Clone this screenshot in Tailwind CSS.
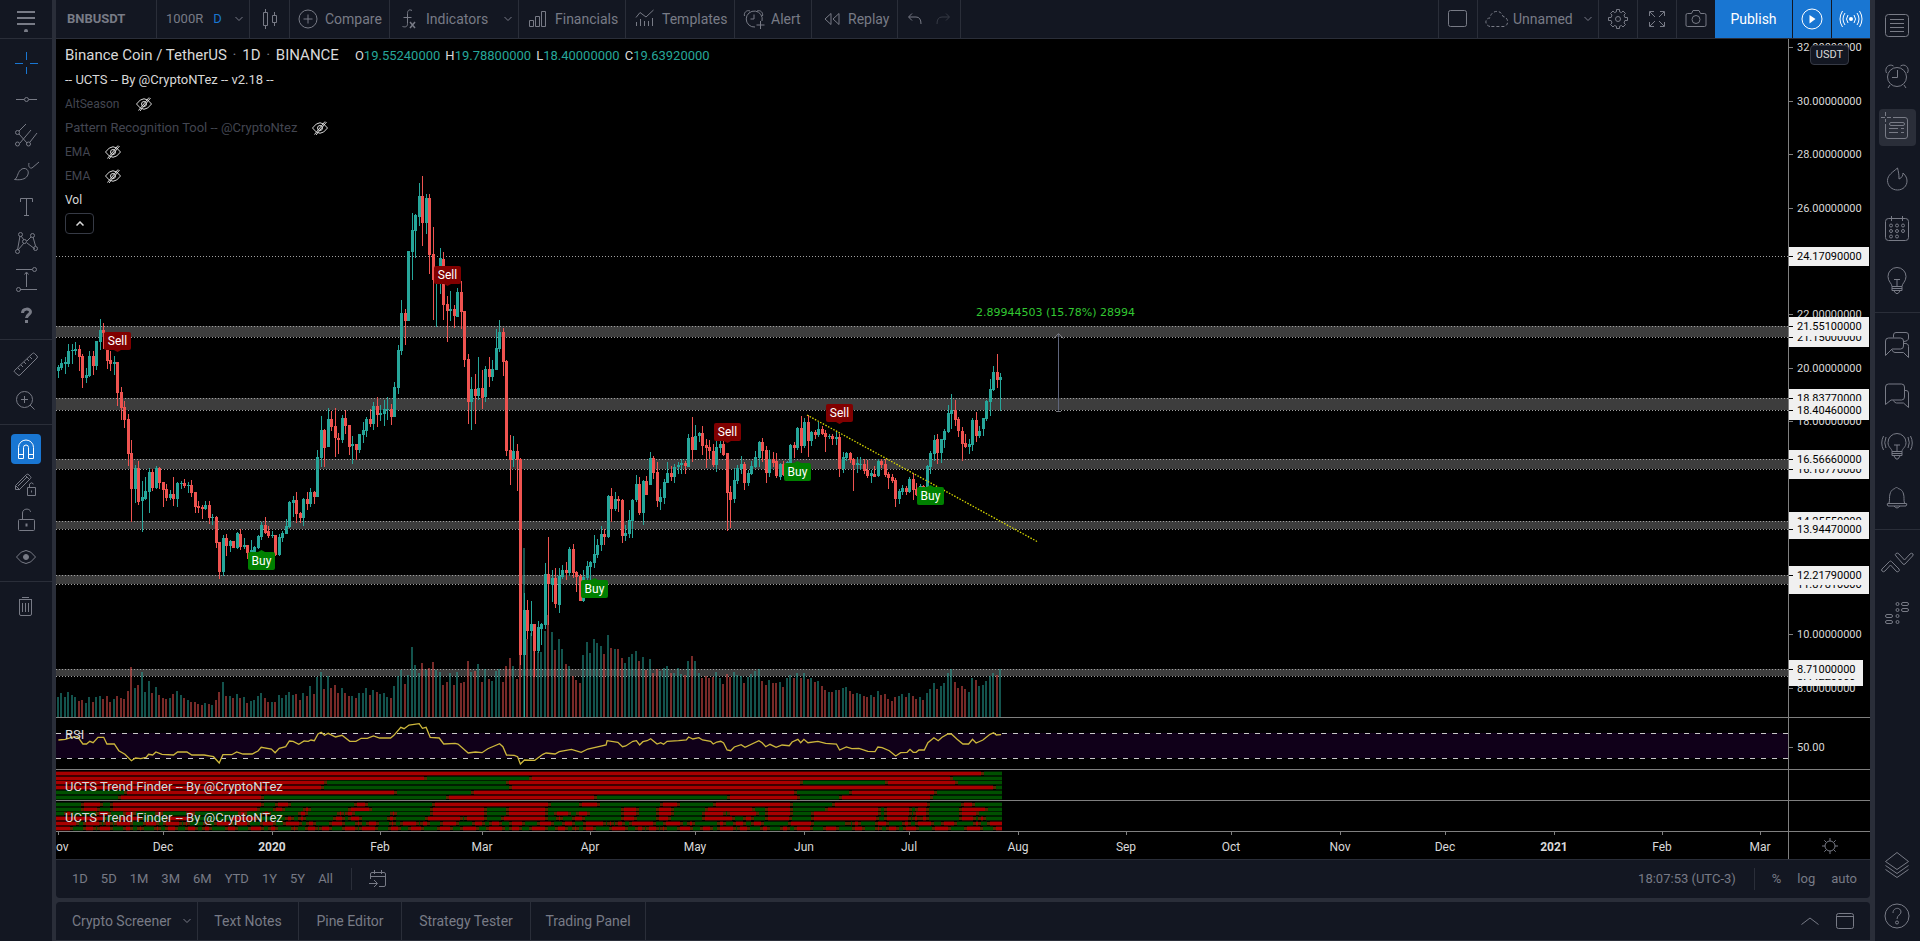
<!DOCTYPE html>
<html lang="en">
<head>
<meta charset="utf-8">
<title>BNBUSDT chart</title>
<script src="https://cdn.jsdelivr.net/npm/@tailwindcss/browser@4"></script>
</head>
<body class="flex h-screen overflow-hidden bg-[#2a2e39] font-['Roboto',sans-serif] text-sm text-[#787b86]">

<!-- Drawing tools -->
<aside class="flex w-[52px] shrink-0 flex-col bg-[#131722]">
  <button aria-label="Menu" class="flex h-[39px] items-center justify-center border-b border-[#2a2e39]">
    <svg width="20" height="26" viewBox="0 0 20 26" fill="none" stroke="currentColor" stroke-width="2"><path d="M1 6h18M1 12h18M1 18h18"/><circle cx="10" cy="25" r="1" stroke-width="2"/></svg>
  </button>
  <div class="flex flex-col items-center border-b border-[#2a2e39] py-1.5">
    <button aria-label="Cross" class="flex h-9 w-full items-center justify-center text-[#1976d2]"><svg width="28" height="28" viewBox="0 0 28 28" fill="none" stroke="currentColor"><path d="M3 14.500h8M18 14.500h8M14.500 3v8M14.500 18v7"/></svg></button>
    <button aria-label="Trend line" class="flex h-9 w-full items-center justify-center"><svg width="28" height="28" viewBox="0 0 28 28" fill="none" stroke="currentColor"><path d="M4 14.500h8M17 14.500h8"/><circle cx="14.500" cy="14.500" r="2"/></svg></button>
    <button aria-label="Pitchfork" class="flex h-9 w-full items-center justify-center"><svg width="28" height="28" viewBox="0 0 28 28" fill="none" stroke="currentColor"><path d="M7 10l7-7M8 22L19 9M7 13l8 9M18 21l7-9"/><circle cx="5.500" cy="11.500" r="2"/><circle cx="5.500" cy="23" r="2"/><circle cx="16.500" cy="23" r="2"/></svg></button>
    <button aria-label="Brush" class="flex h-9 w-full items-center justify-center"><svg width="28" height="28" viewBox="0 0 28 28" fill="none" stroke="currentColor"><path d="M2.500 22.500c3-1 3-7 6-9.500 2-2 5-2 6.500-.500 2 2 1.500 5-.500 7.500-3 3-8 3-12 2.500z"/><path d="M17 6c-1 4 1 5.500 3 5l7-6"/></svg></button>
    <button aria-label="Text" class="flex h-9 w-full items-center justify-center"><svg width="28" height="28" viewBox="0 0 28 28" fill="none" stroke="currentColor"><path d="M8.500 9V5.500h12V9M14.500 5.500v17M12 22.500h5"/></svg></button>
    <button aria-label="Patterns" class="flex h-9 w-full items-center justify-center"><svg width="28" height="28" viewBox="0 0 28 28" fill="none" stroke="currentColor"><path d="M5.500 21L8 7M6 21l6-7M9 7l3 4M15 12l4-4M15 14l8 6M21 8l2.500 9"/><circle cx="8.500" cy="5.500" r="2"/><circle cx="20.500" cy="6.500" r="2"/><circle cx="12.500" cy="12.500" r="2"/><circle cx="5.500" cy="22.500" r="2"/><circle cx="23.500" cy="19.500" r="2"/></svg></button>
    <button aria-label="Prediction" class="flex h-9 w-full items-center justify-center"><svg width="28" height="28" viewBox="0 0 28 28" fill="none" stroke="currentColor"><path d="M4 4.500h16M8 24.500h17M14.500 22V8M12.500 9.500l2-2.500 2 2.500"/><circle cx="22.500" cy="4.500" r="2"/><circle cx="6.500" cy="24.500" r="2"/></svg></button>
    <button aria-label="Icons" class="flex h-9 w-full items-center justify-center"><svg width="28" height="28" viewBox="0 0 28 28" fill="none" stroke="currentColor" stroke-width="3"><path d="M10.500 12c0-5 8-5 8-1 0 2.500-4 2.500-4 6M14.500 19v3"/></svg></button>
  </div>
  <div class="flex flex-col items-center border-b border-[#2a2e39] py-1.5">
    <button aria-label="Measure" class="flex h-9 w-full items-center justify-center"><svg width="28" height="28" viewBox="0 0 28 28" fill="none" stroke="currentColor"><path d="M2.500 20.500L20.500 3.500q1-1 2 0l2.500 2.500q1 1 0 2L8 25q-1 1-2 0l-3.500-3q-.8-.8 0-1.500zM6 18l2 2M9 15l2 2M12 12l2 2M15 9l2 2M18 7l2 2"/></svg></button>
    <button aria-label="Zoom in" class="flex h-9 w-full items-center justify-center"><svg width="28" height="28" viewBox="0 0 28 28" fill="none" stroke="currentColor"><circle cx="12.500" cy="13.500" r="8"/><path d="M12.500 10v7M9 13.500h7M18 19l4.500 4.500"/></svg></button>
  </div>
  <div class="flex flex-col items-center border-b border-[#2a2e39] py-1.5">
    <div class="flex h-9 items-center"><button aria-label="Magnet" class="flex size-[30px] items-center justify-center rounded-sm bg-[#1976d2] text-white"><svg width="28" height="28" viewBox="0 0 28 28" fill="none" stroke="currentColor"><path d="M6.500 23.500v-11a7.500 7.500 0 0 1 15 0v11h-5v-11a2.500 2.500 0 0 0-5 0v11zM6.500 19.500h5M16.500 19.500h5"/></svg></button></div>
    <button aria-label="Stay in drawing mode" class="flex h-9 w-full items-center justify-center"><svg width="28" height="28" viewBox="0 0 28 28" fill="none" stroke="currentColor"><path d="M3.500 18.500v-4l11-11q1.500-1 2.500.500l1.500 1.500q1 1 0 2l-11 11zM4 15l4 4M6 15l9-9M14 5l3 3M15.500 16.500h8v8h-8zM17.500 16v-3q2-2.500 4 0M19.500 19.500v2"/></svg></button>
    <button aria-label="Lock drawings" class="flex h-9 w-full items-center justify-center"><svg width="28" height="28" viewBox="0 0 28 28" fill="none" stroke="currentColor"><rect x="6.500" y="12.500" width="16" height="11" rx="1"/><path d="M10.500 12V6c0-5 8-5 8-1"/><path d="M14.500 16.500v3" stroke-width="2"/></svg></button>
    <button aria-label="Hide drawings" class="flex h-9 w-full items-center justify-center"><svg width="28" height="28" viewBox="0 0 28 28" fill="none" stroke="currentColor"><path d="M4.500 14q9.500-13 19 0-9.500 13-19 0z"/><circle cx="14" cy="14" r="2.500" fill="currentColor"/></svg></button>
  </div>
  <div class="flex flex-col items-center py-1.5">
    <button aria-label="Remove drawings" class="flex h-9 w-full items-center justify-center"><svg width="28" height="28" viewBox="0 0 28 28" fill="none" stroke="currentColor"><path d="M7 7.500h13M10 5.500h7M7.500 8v14q0 1.500 1.500 1.500h9q1.500 0 1.500-1.500V8M10.500 11v9M13.500 11v9M16.500 11v9"/></svg></button>
  </div>
</aside>

<div class="ml-1 flex min-w-0 flex-1 flex-col">
  <!-- Top toolbar -->
  <header class="flex h-[39px] shrink-0 border-b border-[#2a2e39] bg-[#131722]">
    <button class="w-[101px] border-r border-[#2a2e39] pl-[11px] text-left text-[13px] font-bold">BNBUSDT</button>
    <div class="flex w-[93px] items-center border-r border-[#2a2e39] pl-[9px]">
      <button class="text-[13px]">1000R</button><button class="ml-2.5 text-[13px] text-[#1976d2]">D</button>
      <button aria-label="Intervals" class="ml-auto pr-1.5"><svg width="8" height="6" viewBox="0 0 8 6" fill="none" stroke="currentColor"><path d="M.5 1L4 4.500 7.500 1"/></svg></button>
    </div>
    <button aria-label="Chart type" class="flex w-[40px] items-center justify-center border-r border-[#2a2e39]"><svg width="16" height="20" viewBox="0 0 16 20" fill="none" stroke="currentColor"><path d="M1.500 3.500h4v13h-4zM3.500 3.500V0M3.500 16.500V20M10.500 6.500h4v7h-4zM12.500 6.500V3M12.500 13.500V17"/></svg></button>
    <button class="flex w-[100px] items-center gap-[7px] border-r border-[#2a2e39] pl-2"><svg width="20" height="20" viewBox="0 0 20 20" fill="none" stroke="currentColor"><circle cx="10" cy="10" r="9"/><path d="M10 5.500v9M5.500 10h9"/></svg>Compare</button>
    <button class="flex w-[129px] items-center gap-[7px] border-r border-[#2a2e39] pl-[9px]"><svg width="20" height="20" viewBox="0 0 20 20" fill="none" stroke="currentColor"><path d="M13 1.500c-3-1.500-4.500 0-4.500 3v10c0 3-1.500 4-5 3M4.500 8.500h8"/><path stroke-width="1.500" d="M11 13l5 6M16 13l-5 6"/></svg>Indicators<svg class="ml-auto mr-1.5" width="8" height="6" viewBox="0 0 8 6" fill="none" stroke="currentColor"><path d="M.5 1L4 4.500 7.500 1"/></svg></button>
    <button class="flex w-[107px] items-center gap-[7px] border-r border-[#2a2e39] pl-[9px]"><svg width="20" height="20" viewBox="0 0 20 20" fill="none" stroke="currentColor"><path d="M1.500 11.500h4v6h-4zM7.500 7.500h4v10h-4zM13.500 2.500h4v15h-4z"/></svg>Financials</button>
    <button class="flex w-[109px] items-center gap-[7px] border-r border-[#2a2e39] pl-[9px]"><svg width="20" height="20" viewBox="0 0 20 20" fill="none" stroke="currentColor"><path d="M1 8.500l4-5 6 4.500 7.500-7M1.500 13v4M5.500 10v7M9.500 12v5M13.500 12v5M17.500 9v8"/></svg>Templates</button>
    <button class="flex w-[77px] items-center gap-1.5 border-r border-[#2a2e39] pl-2"><svg width="22" height="22" viewBox="0 0 22 22" fill="none" stroke="currentColor"><path d="M12 19a8 8 0 1 1 7-6M1.500 8c-1-3 2-6.500 5.500-5M19.500 8c1-3-2-6.500-5.500-5M11 6.500V11H7.500M17.500 13v8M13.500 17h8"/></svg>Alert</button>
    <button class="flex w-[86px] items-center gap-1.5 border-r border-[#2a2e39] pl-2.5"><svg width="20" height="14" viewBox="0 0 20 14" fill="none" stroke="currentColor"><path d="M9 1.500v11L3 7zM17 1.500v11L11 7z"/></svg>Replay</button>
    <div class="flex w-[63px] items-center justify-center gap-3 border-r border-[#2a2e39]">
      <button aria-label="Undo"><svg width="16" height="12" viewBox="0 0 16 12" fill="none" stroke="currentColor"><path d="M5 .5L1.500 4 5 7.500M2 4h7q5 0 5 7"/></svg></button>
      <button aria-label="Redo" class="text-[#363a45]"><svg width="16" height="12" viewBox="0 0 16 12" fill="none" stroke="currentColor"><path d="M11 .5L14.500 4 11 7.500M14 4H7Q2 4 2 11"/></svg></button>
    </div>
    <div class="flex-1"></div>
    <button aria-label="Layout" class="flex w-[39px] items-center justify-center border-l border-[#2a2e39]"><svg width="20" height="18" viewBox="0 0 20 18" fill="none" stroke="currentColor"><rect x=".5" y=".5" width="18" height="16" rx="2"/></svg></button>
    <button class="flex w-[121px] items-center gap-1 border-l border-[#2a2e39] pl-[7px]"><svg width="24" height="18" viewBox="0 0 24 18" fill="none" stroke="currentColor" stroke-dasharray="3 2"><path d="M5 16.500C-1 15 0 8 5 8 6 0 16-1 18 6.500c6 1 6 9 1 10z"/></svg>Unnamed<svg class="ml-auto mr-1.5" width="8" height="6" viewBox="0 0 8 6" fill="none" stroke="currentColor"><path d="M.5 1L4 4.500 7.500 1"/></svg></button>
    <button aria-label="Settings" class="flex w-[39px] items-center justify-center border-l border-[#2a2e39]"><svg width="20" height="20" viewBox="0 0 20 20" fill="none" stroke="currentColor"><path d="M8.500.5h3v2.200l2 .9L15 2l2.500 2.500L16 6l.9 2.500h2.600v3h-2.600L16 14l1.500 1.500L15 18l-1.500-1.500-2 .8v2.200h-3v-2.200l-2-.8L5 18l-2.500-2.500L4 14l-.9-2.500H.5v-3h2.600L4 6 2.500 4.500 5 2l1.500 1.600 2-.9z"/><circle cx="10" cy="10" r="2.500"/></svg></button>
    <button aria-label="Fullscreen" class="flex w-[39px] items-center justify-center border-l border-[#2a2e39]"><svg width="18" height="18" viewBox="0 0 18 18" fill="none" stroke="currentColor"><path d="M1.500 6V1.500H6M12 1.500h4.500V6M16.500 12v4.500H12M6 16.500H1.500V12M2 2l5 5M16 2l-5 5M16 16l-5-5M2 16l5-5"/></svg></button>
    <button aria-label="Snapshot" class="flex w-[39px] items-center justify-center border-l border-[#2a2e39]"><svg width="22" height="18" viewBox="0 0 22 18" fill="none" stroke="currentColor"><path d="M2.500 3.500h4l1.500-3h6l1.500 3h4q1.500 0 1.500 1.500v10q0 1.500-1.500 1.500h-17Q1 16.500 1 15V5q0-1.500 1.500-1.500z"/><circle cx="11" cy="9.500" r="4"/></svg></button>
    <button class="h-[38px] w-[77px] bg-[#1976d2] text-white">Publish</button>
    <button aria-label="Play" class="ml-px flex h-[38px] w-[38px] items-center justify-center bg-[#1976d2] text-white"><svg width="22" height="22" viewBox="0 0 22 22" fill="none" stroke="currentColor"><circle cx="11" cy="11" r="10"/><path fill="currentColor" stroke="none" d="M8.500 7l6 4-6 4.500z"/></svg></button>
    <button aria-label="Broadcast" class="ml-px flex h-[38px] w-[38px] items-center justify-center bg-[#1976d2] text-white"><svg width="24" height="18" viewBox="0 0 24 18" fill="none" stroke="currentColor"><circle cx="12" cy="9" r="2" fill="currentColor" stroke="none"/><path d="M9 5q-3 4 0 8M15 5q3 4 0 8M6 3q-4 6 0 12M18 3q4 6 0 12M3.500 1q-5 8 0 16M20.500 1q5 8 0 16"/></svg></button>
  </header>

  <!-- Chart panes -->
  <main class="relative flex min-h-0 flex-1 flex-col overflow-hidden bg-black text-[#d9d9d9]">
    <div class="flex min-h-0 flex-1">
      <div class="relative min-w-0 flex-1 overflow-hidden">
        <svg class="absolute inset-0 h-full w-full" font-family="Roboto, sans-serif" font-size="12"><g id="price" transform="translate(-56 -39)"></g></svg>
        <div class="absolute left-[9px] top-[5px] flex flex-col text-xs">
          <div class="flex h-6 items-center"><h1 class="text-[15px]">Binance Coin / TetherUS <span class="mx-0.5 text-[#787b86]">·</span> 1D <span class="mx-0.5 text-[#787b86]">·</span> BINANCE</h1>
            <p class="ml-4 flex gap-[5px] text-[13px] text-[#26a69a]"><span><span class="text-[#d9d9d9]">O</span>19.55240000</span><span><span class="text-[#d9d9d9]">H</span>19.78800000</span><span><span class="text-[#d9d9d9]">L</span>18.40000000</span><span><span class="text-[#d9d9d9]">C</span>19.63920000</span></p></div>
          <p class="h-6 text-[13px] leading-6">-- UCTS -- By @CryptoNTez -- v2.18 --</p>
          <div class="flex h-6 items-center gap-4 text-[#434651]">AltSeason<button aria-label="Show AltSeason" class="text-[#d9d9d9]"><svg width="18" height="14" viewBox="0 0 18 14" fill="none" stroke="currentColor"><path d="M1.500 7Q9-3.500 16.500 7 9 17.500 1.500 7zM3.500 13.500L14 .5M5 14L15.500 1"/><circle cx="9" cy="7" r="2.500"/></svg></button></div>
          <div class="flex h-6 items-center gap-3.5 text-[13px] text-[#434651]">Pattern Recognition Tool -- @CryptoNtez<button aria-label="Show pattern tool" class="text-[#d9d9d9]"><svg width="18" height="14" viewBox="0 0 18 14" fill="none" stroke="currentColor"><path d="M1.500 7Q9-3.500 16.500 7 9 17.500 1.500 7zM3.500 13.500L14 .5M5 14L15.500 1"/><circle cx="9" cy="7" r="2.500"/></svg></button></div>
          <div class="flex h-6 items-center gap-3.5 text-[#434651]">EMA<button aria-label="Show EMA 1" class="text-[#d9d9d9]"><svg width="18" height="14" viewBox="0 0 18 14" fill="none" stroke="currentColor"><path d="M1.500 7Q9-3.500 16.500 7 9 17.500 1.500 7zM3.500 13.500L14 .5M5 14L15.500 1"/><circle cx="9" cy="7" r="2.500"/></svg></button></div>
          <div class="flex h-6 items-center gap-3.5 text-[#434651]">EMA<button aria-label="Show EMA 2" class="text-[#d9d9d9]"><svg width="18" height="14" viewBox="0 0 18 14" fill="none" stroke="currentColor"><path d="M1.500 7Q9-3.500 16.500 7 9 17.500 1.500 7zM3.500 13.500L14 .5M5 14L15.500 1"/><circle cx="9" cy="7" r="2.500"/></svg></button></div>
          <p class="h-6 leading-6">Vol</p>
          <button aria-label="Collapse legend" class="mt-px flex h-[21px] w-[29px] items-center justify-center rounded-sm border border-[#363a45]"><svg width="8" height="5" viewBox="0 0 8 5" fill="none" stroke="currentColor" stroke-width="1.500"><path d="M.5 4.500L4 1l3.500 3.500"/></svg></button>
        </div>
      </div>
      <div class="relative w-[82px] shrink-0 overflow-hidden border-l border-[#7f7f7f]">
        <svg class="absolute inset-0 h-full w-full" font-family="Roboto, sans-serif" font-size="11"><g id="scale" transform="translate(-1789 -39)"></g></svg>
        <button class="absolute left-[21px] top-1.5 h-5 w-[39px] rounded-sm border border-[#363a45] bg-[#131722] text-[11px]">USDT</button>
      </div>
    </div>
    <div class="flex h-[52px] shrink-0 border-t border-[#7f7f7f]">
      <div class="relative min-w-0 flex-1 overflow-hidden">
        <svg class="absolute inset-0 h-full w-full"><g id="rsi" transform="translate(-56 -718)"></g></svg>
        <span class="absolute left-[9px] top-2 text-[13px] leading-[18px]">RSI</span>
      </div>
      <div class="flex w-[82px] shrink-0 items-center border-l border-[#7f7f7f] pt-2 text-[11px]"><span class="mr-1 h-px w-1 bg-[#7f7f7f]"></span>50.00</div>
    </div>
    <div class="flex h-[31px] shrink-0 border-t border-[#7f7f7f]">
      <div class="relative min-w-0 flex-1 overflow-hidden">
        <svg class="absolute inset-0 h-full w-full"><g id="trendA" transform="translate(-56 -770)"></g></svg>
        <span class="absolute left-[9px] top-2 text-[13px] leading-[18px]">UCTS Trend Finder -- By @CryptoNTez</span>
      </div>
      <div class="w-[82px] shrink-0 border-l border-[#7f7f7f]"></div>
    </div>
    <div class="flex h-[31px] shrink-0 border-t border-[#7f7f7f]">
      <div class="relative min-w-0 flex-1 overflow-hidden">
        <svg class="absolute inset-0 h-full w-full"><g id="trendB" transform="translate(-56 -801)"></g></svg>
        <span class="absolute left-[9px] top-2 text-[13px] leading-[18px]">UCTS Trend Finder -- By @CryptoNTez</span>
      </div>
      <div class="w-[82px] shrink-0 border-l border-[#7f7f7f]"></div>
    </div>
    <div class="flex h-7 shrink-0 border-t border-[#7f7f7f]">
      <div class="relative min-w-0 flex-1 overflow-hidden">
        <svg class="absolute inset-0 h-full w-full" font-family="Roboto, sans-serif" font-size="12"><g id="time" transform="translate(-56 -832)"></g></svg>
      </div>
      <button aria-label="Axis settings" class="flex w-[82px] shrink-0 items-center justify-center border-l border-[#7f7f7f] text-[#787b86]"><svg width="16" height="16" viewBox="0 0 16 16" fill="none" stroke="currentColor"><circle cx="8" cy="8" r="5"/><path d="M8 0v3M8 13v3M0 8h3M13 8h3M2.300 2.300l2 2M11.700 11.700l2 2M2.300 13.700l2-2M11.700 4.300l2-2"/></svg></button>
    </div>
  </main>

  <!-- Range toolbar -->
  <div class="flex h-[39px] shrink-0 items-center rounded-b border-t border-[#2a2e39] bg-[#131722] text-[13px]">
    <div class="flex gap-[13px] pl-4">
      <button>1D</button><button>5D</button><button>1M</button><button>3M</button><button>6M</button><button>YTD</button><button>1Y</button><button>5Y</button><button>All</button>
    </div>
    <span class="ml-[18px] h-[22px] w-px bg-[#2a2e39]"></span>
    <button aria-label="Go to date" class="ml-4"><svg width="20" height="18" viewBox="0 0 20 18" fill="none" stroke="currentColor"><path d="M2.500 9V4Q2.500 2.500 4 2.500h12q1.500 0 1.500 1.500v11q0 1.500-1.500 1.500h-5M2.500 6.500h15M6.500 0v4M13.500 0v4M1 13.500h8M6 10l3.500 3.500L6 17"/></svg></button>
    <button class="ml-auto">18:07:53 (UTC-3)</button>
    <span class="ml-[18px] h-[22px] w-px bg-[#2a2e39]"></span>
    <button class="ml-[17px]">%</button><button class="ml-4">log</button><button class="ml-4 mr-[13px]">auto</button>
  </div>

  <!-- Bottom tabs -->
  <footer class="mt-1 mb-px flex h-[38px] shrink-0 rounded-t bg-[#131722]">
    <button class="flex w-[142px] items-center border-r border-[#2a2e39] pl-4">Crypto Screener<svg class="ml-auto mr-1.5" width="8" height="6" viewBox="0 0 8 6" fill="none" stroke="currentColor"><path d="M.5 1L4 4.500 7.500 1"/></svg></button>
    <button class="w-[101px] border-r border-[#2a2e39]">Text Notes</button>
    <button class="w-[103px] border-r border-[#2a2e39]">Pine Editor</button>
    <button class="w-[129px] border-r border-[#2a2e39]">Strategy Tester</button>
    <button class="w-[115px] border-r border-[#2a2e39]">Trading Panel</button>
    <button aria-label="Expand panel" class="ml-auto"><svg width="18" height="8" viewBox="0 0 18 8" fill="none" stroke="currentColor"><path d="M.5 7.500L9 1l8.500 6.500"/></svg></button>
    <button aria-label="Maximize panel" class="ml-[17px] mr-4"><svg width="18" height="16" viewBox="0 0 18 16" fill="none" stroke="currentColor"><rect x=".5" y=".5" width="17" height="15" rx="2"/><path d="M.5 3.500h17"/></svg></button>
  </footer>
</div>

<!-- Widget bar -->
<nav aria-label="Widgets" class="ml-[5px] flex w-[45px] shrink-0 flex-col bg-[#131722]">
  <div class="flex flex-col items-center border-b border-[#2a2e39] pb-1.5 pr-px">
    <button aria-label="Watchlist" class="flex h-[51px] items-center"><svg width="26" height="26" viewBox="0 0 26 26" fill="none" stroke="currentColor"><rect x="1.500" y="1.500" width="23" height="22" rx="3"/><path d="M6 6.500h14M6 10.500h14M6 14.500h14M6 18.500h14"/></svg></button>
    <button aria-label="Alerts" class="flex h-[51px] items-center"><svg width="26" height="26" viewBox="0 1 26 26" fill="none" stroke="currentColor"><circle cx="13" cy="14" r="9.500"/><path d="M2.500 10C0 5 5 0 9.500 3M23.500 10C26 5 21 0 16.500 3M13.500 7v7.500H8M6 22l-2 3M20 22l2 3"/></svg></button>
    <div class="flex h-[51px] items-center"><button aria-label="Data window" class="flex h-[37px] w-[37px] items-center justify-center rounded bg-[#2a2e39]"><svg class="overflow-visible" width="34" height="30" viewBox="1 3 34 30" fill="none" stroke="currentColor"><path d="M2 7.500h4M8 7.500h4M6.500 2v4M6.500 9v3M14 7.500h12q2.500 0 2.500 2.500v16q0 2.500-2.500 2.500H9q-2.500 0-2.500-2.500V15M6.500 15v-1"/><rect x="10.500" y="12.500" width="15" height="3" rx="1.500"/><path d="M10 18.500h9M22 18.500h3M10 22.500h9M22 22.500h3"/></svg></button></div>
    <button aria-label="Hotlist" class="flex h-[51px] items-center"><svg width="26" height="26" viewBox="0 0 26 26" fill="none" stroke="currentColor"><path d="M13.500 2c1 4 1.500 6 1.500 11 3-1 4-4 4-6 3 3 4 5 4 8 0 5-4 9-9.500 9S3.500 20 3.500 14.500C3.500 9 9 6 13.500 2z"/></svg></button>
    <button aria-label="Calendar" class="flex h-[51px] items-center"><svg width="26" height="28" viewBox="0 1 26 28" fill="none" stroke="currentColor"><rect x="1.500" y="3.500" width="23" height="22" rx="3"/><path d="M7.500 1v5M18.500 1v5"/><circle cx="7" cy="10.500" r="1.500"/><circle cx="13" cy="10.500" r="1.500"/><circle cx="19" cy="10.500" r="1.500"/><circle cx="7" cy="16" r="1.500"/><circle cx="13" cy="16" r="1.500"/><circle cx="19" cy="16" r="1.500"/><circle cx="7" cy="21.500" r="1.500"/><circle cx="13" cy="21.500" r="1.500"/></svg></button>
    <button aria-label="My ideas" class="flex h-[51px] items-center"><svg width="26" height="28" viewBox="0 0 26 28" fill="none" stroke="currentColor"><path d="M8 19.500c0-3-4-5-4-10a9 9 0 0 1 18 0c0 5-4 7-4 10zM8 19.500v4h10v-4M8 21.500h10M10 24l2 2.500h2l2-2.500M13 19v-6M10 12.500h6"/></svg></button>
  </div>
  <div class="flex flex-col items-center border-b border-[#2a2e39] py-1.5 pr-px">
    <button aria-label="Public chats" class="flex h-[51px] items-center"><svg width="26" height="28" viewBox="0 0 26 28" fill="none" stroke="currentColor"><path d="M1.500 24.500V10q0-3 3-3h12q3 0 3 3v5q0 3-3 3H8zM9.500 6.500V4q0-2.500 2.500-2.500h10q2.500 0 2.500 2.500v3q0 3-4.500 3.500M20 12.500q4.500-.5 4.500 3v11l-5-5H11q-2 0-3-2.500"/></svg></button>
    <button aria-label="Private chats" class="flex h-[51px] items-center"><svg width="26" height="26" viewBox="0 0 26 26" fill="none" stroke="currentColor"><path d="M1.500 21.500V4q0-3 3-3h13q3 0 3 3v10q0 3-3 3H7zM20.500 7.500h1.500q2.500 0 2.500 2.500v14.500l-5-4.500h-7q-2 0-3-2.500"/></svg></button>
    <button aria-label="Ideas stream" class="flex h-[51px] items-center"><svg width="32" height="28" viewBox="0 0 32 28" fill="none" stroke="currentColor"><path d="M11 18.500c0-3-4-4-4-9a9 9 0 0 1 18 0c0 5-4 6-4 9zM11 18.500v4h10v-4M11 20.500h10M13 23l2 3h2l2-3M16 18v-6M13 12h6M5 4q-2.500 6 0 11M2.500 3q-3.500 7 0 14M27 4q2.500 6 0 11M29.500 3q3.500 7 0 14"/></svg></button>
    <button aria-label="Notifications" class="flex h-[51px] items-center"><svg width="26" height="26" viewBox="0 1 26 26" fill="none" stroke="currentColor"><path d="M5 19c1-3 0-6 1-9 1-4 3.500-5 5-5.500q1.500-3 3 0C16 5 18.500 6 19.500 10c1 3 0 6 1 9M4 19.500h18q1.500 0 .5 1.500l-.5 1H4l-.5-1q-1-1.500.5-1.500zM10 22q3 4 6 0"/></svg></button>
  </div>
  <div class="flex flex-col items-center pt-1.5 pr-px">
    <button aria-label="Order panel" class="flex h-[51px] items-center"><svg width="34" height="22" viewBox="0 -2 34 22" fill="none" stroke="currentColor"><path d="M2 16L9.500 8.500q1-1 2 0L19 16q1 1.500-.5 2.500t-2.500-.500L10.500 12 5 18q-1.500 1.500-3 0-1-1 0-2zM16 3q-1.500-1.500 0-2.500t3 .5l5.500 6L30 1q1.500-1.500 3 0 .5 1-.5 2L25 11q-1 1-2 0z"/></svg></button>
    <button aria-label="Depth of market" class="flex h-[51px] items-center"><svg width="28" height="24" viewBox="0 0 28 24" fill="none" stroke="currentColor"><circle cx="14.500" cy="3" r="1.500"/><circle cx="14.500" cy="9" r="1.500"/><circle cx="14.500" cy="15" r="1.500"/><circle cx="14.500" cy="21" r="1.500"/><rect x="18.500" y="1.500" width="7" height="3" rx="1.500"/><rect x="18.500" y="7.500" width="7" height="3" rx="1.500"/><rect x="2.500" y="13.500" width="7" height="3" rx="1.500"/><rect x="2.500" y="19.500" width="7" height="3" rx="1.500"/></svg></button>
  </div>
  <div class="mt-auto flex flex-col items-center pr-px">
    <button aria-label="Object tree" class="flex h-[51px] items-center"><svg width="26" height="28" viewBox="0 0 26 28" fill="none" stroke="currentColor"><path d="M13 1.500l11.500 9L13 18.500 1.500 10.500zM1.500 14.500l11.500 8 11.500-8M1.500 18.500l11.500 8 11.500-8"/></svg></button>
    <button aria-label="Help" class="flex h-[51px] items-center"><svg width="26" height="26" viewBox="0 0 26 26" fill="none" stroke="currentColor"><circle cx="13" cy="13" r="12"/><path d="M9 10c0-6 8-6 8-1 0 3-4 3-4 7"/><circle cx="13" cy="19.500" r="1.500"/></svg></button>
  </div>
</nav>

<script>
const NS = 'http://www.w3.org/2000/svg';
const add = (id, tag, attrs, text) => {
  const e = document.createElementNS(NS, tag);
  for (const k in attrs) e.setAttribute(k, attrs[k]);
  if (text) e.textContent = text;
  document.getElementById(id).appendChild(e);
};
const rect = (id, x, y, width, height, fill, more) => add(id, 'rect', { x, y, width, height, fill, ...more });
const X0 = 58.4, STEP = 3.503, barX = i => Math.floor(X0 + i * STEP);

// Each candle: direction, high, body top, body bottom, low, in thirds of a pixel below the segment's base line
const segments = [
 [230, `g405 410 423 443,g388 400 413 419,g381 396 402 432,g342 362 402 410,g342 360 364 402,g336 357 362 375,r345 357 381 424,r372 378 443 474,g414 435 443 459,g363 378 438 441,r363 378 407 435,g333 333 408 420,g267 300 335 360,r279 300 309 357,r340 345 393 417,r363 390 402 423,g378 396 402 435,r396 396 489 528,r471 486 535 570,r513 531 570 594,r552 567 672 708,r630 669 777 876,g705 714 777 819,r693 714 816 825,g753 801 813 906,g741 783 807 810,g714 726 786 849,r717 726 774 783,g708 714 774 777,r711 714 759 777,r756 756 780 831,r762 777 804 813,g780 792 804 810,r741 792 807 828,g756 759 807 831,g753 759 762 777,r747 759 768 774,g756 765 768 789,r750 765 789 801,r786 786 831 849,r813 828 834 849,r825 831 837 867,g813 825 837 840,r813 825 864 882,g852 861 864 885,r858 861 939 954,r936 936 1026 1047,g915 924 1026 1038,r912 924 948 978,g930 933 948 966,r933 933 954 954,g906 909 954 957,r897 912 951 960,g924 945 951 957,r945 945 968 987,g930 960 966 975,g948 950 966 975,g915 918 954 957,g876 885 921 930,r861 885 909 912,r888 903 918 924,g903 915 918 924,r915 915 975 978,g912 921 975 978,g903 909 924 936,g867 888 912 912,g813 816 891 894,g798 810 819 861,r786 810 852 879,r846 849 864 879,g804 807 864 888,r786 807 822 840,g774 786 822 831,r783 786 801 822,g660 682 801 801,g558 600 684 711,r597 600 654 711,g534 567 651 651,r543 567 591 603,r534 588 624 681,r609 624 630 672,g555 564 630 639,r540 564 588 612,r585 585 651 675,g618 642 648 702,r642 642 660 690,g612 612 660 669,g576 600 615 639,g561 567 603 621,r537 567 582 591,g516 528 582 600,r501 528 555 591,g525 549 555 573,g510 537 552 588,g501 537 540 570`],
 [160, `r732 747 771 795,g666 681 771 771,g555 570 684 702,g420 459 573 585,r447 459 483 555,g273 273 483 483,g159 210 276 360,g162 165 213 294,g69 108 171 198,r48 108 189 258,g102 114 189 222,r102 114 285 342,r201 282 360 480,g330 345 370 501,g264 294 345 402,r276 297 435 480,r408 432 453 546,g393 447 453 483,r435 447 468 504,g384 396 471 471,r363 396 456 507,r453 453 600 621,r582 597 726 792,g651 687 726 810,r642 687 708 792,g591 684 708 720,r630 684 714 747,g618 627 711 726,r591 627 651 681,g600 627 651 663,g507 564 630 630,g480 516 567 576,r504 516 606 648,r600 603 873 888,r825 870 900 975,g828 873 897 921,r852 873 900 993,r894 897 1485 1515`],
 [500, `g280 330 465 651,r300 330 393 417,g303 372 393 408,r372 372 453 530,g363 381 453 459,g369 372 387 435,g189 222 375 387,r111 222 252 375,g210 234 255 306,r204 234 312 324,g204 228 315 339,g195 210 231 237,r186 210 219 240,g141 147 219 228,r132 147 219 234,r213 216 231 276,r222 228 303 303,g210 230 303 306,g183 198 234 240,g183 186 201 240,g105 162 189 204,g117 135 165 174,g78 102 135 153,r87 102 111 135,g-15 -12 111 114,r-36 -12 27 66,g-24 -3 27 33,r-12 -3 3 36,r-3 0 108 129,g75 99 108 123,g30 60 102 114,g-3 0 63 114,g-75 -48 0 6,r-69 -48 38 45,g-60 -57 38 75,r-72 -57 -15 -15,g-144 -126 -45 -45,r-132 -126 -81 -63,r-114 -84 3 20,g-33 -9 6 30`],
 [330, `g447 456 504 522,g396 429 459 459,r408 429 441 453,g402 411 441 459,g396 405 411 432,g387 399 405 432,r393 399 408 432,g312 324 411 411,r261 321 360 396,g285 318 360 360,g306 309 318 336,r288 309 348 375,r327 345 354 414,r330 351 363 387,r342 363 405 411,g333 351 405 426,g333 342 354 369,r333 342 375 378,r369 369 489 603,r468 486 510 594,g414 450 507 519,g405 414 453 462,g378 402 417 432,r396 402 459 480,g420 429 459 468,g393 408 432 435,g363 381 411 414,g333 336 384 411,r324 336 363 396,r348 360 429 459,g360 387 429 441,r366 387 399 411,r369 393 438 444,g399 402 441 450,r393 402 435 438,g393 396 435 435,g342 345 405 405,r336 345 354 384,g291 294 354 360,r258 294 348 369,g264 276 348 354,r255 276 333 381,g303 306 333 348,r300 306 315 327,g276 297 315 321,r288 297 312 315,r300 309 321 366,g312 318 321 327,r312 318 327 345,g306 321 327 345,r312 321 417 441,g366 381 417 429,g366 369 384 393,r366 369 390 399,r384 387 405 483,g381 399 405 429,g381 402 405 420,r387 402 423 432,r390 420 438 444,g420 429 438 459,r408 432 441 441,g387 393 438 441,r387 393 405 414,r387 402 435 441,r426 432 444 477,r432 441 453 459,r444 450 507 531,g477 483 507 522,g465 474 486 495,r468 474 486 495,g441 447 486 489,r429 447 480 510,r460 477 495 498,g462 468 495 498,r465 468 475 480,g405 408 471 471,g363 369 411 432,g315 330 372 393,r312 327 369 402,g327 327 369 399,g297 303 330 354,g225 249 306 309,g192 240 252 297,r210 240 270 288,r261 267 303 321,r291 303 342 393,r312 339 351 354,g327 342 351 372,g264 270 345 363,r246 270 318 336,g288 303 318 324,g264 264 297 318,g210 213 267 273,g147 177 216 258,g108 126 180 183,r72 126 150 174,g129 141 150 243`]
];
const candles = segments.flatMap(([base, s]) => s.split(',').map(c => {
  const [h, t, b, l] = c.slice(1).split(' ').map(v => Math.round(base + v / 3));
  return { up: c[0] === 'g', h, t, b, l };
}));

// Volume bar tops, in thirds of a pixel below y = 600
const volume = '291 279 291 276 285 291 303 300 309 291 306 291 288 297 288 306 297 288 294 297 273 201 264 255 216 276 243 279 261 285 294 297 294 282 273 285 294 300 306 306 312 315 309 312 315 300 276 246 288 288 294 282 294 291 309 303 300 288 279 294 306 306 306 285 294 285 276 285 282 300 279 288 258 282 231 216 267 228 264 255 279 264 279 288 288 294 279 279 264 285 270 276 282 279 291 294 258 228 210 252 225 141 195 219 189 210 204 186 210 216 255 246 219 255 216 249 246 183 216 213 192 246 207 237 243 213 207 246 198 174 198 237 150 -156 117 100 80 156 156 93 45 96 150 117 147 192 198 228 240 249 165 126 159 117 129 138 162 105 144 147 147 174 189 171 162 153 183 171 210 177 219 207 213 204 198 219 219 204 222 225 183 168 183 219 234 228 234 231 216 234 252 222 231 216 225 228 249 231 222 213 207 243 255 240 249 249 246 261 234 225 234 219 234 219 237 234 246 243 258 270 276 276 270 270 264 261 273 282 279 282 288 291 285 291 273 285 282 297 303 291 288 282 291 279 288 297 291 300 279 267 249 267 258 249 219 207 246 264 258 267 276 234 240 258 255 243 228 219 225 207'.split(' ').map(Number);

// Support and resistance zones
const zones = [[326, 337], [398, 410], [459, 469], [521, 529], [575, 584], [669, 676]];
const dotted = y => add('price', 'path', { d: `M56 ${y}.5H4000`, stroke: '#a0a0a0', 'stroke-dasharray': '1 2' });
zones.forEach(([a, b]) => { rect('price', 56, a, 4000, b - a, '#3d3d3d'); dotted(a); dotted(b); });
dotted(256);
candles.forEach((c, i) => {
  const top = Math.round(600 + volume[i] / 3);
  rect('price', barX(i) - 1, top, 2, 717 - top, c.up ? '#26a69a' : '#ef5350', { 'fill-opacity': .5 });
});
candles.forEach((c, i) => {
  const fill = c.up ? '#26a69a' : '#ef5350', x = barX(i);
  rect('price', x, c.h, 1, Math.max(1, c.l - c.h), fill);
  rect('price', x - 1, c.t, 3, Math.max(1, c.b - c.t), fill);
});

// Trend line and projected move
add('price', 'path', { d: 'M807 415L1038 542', stroke: '#d8d800', 'stroke-dasharray': '1.500 1.500', 'stroke-width': 1.300 });
add('price', 'path', { d: 'M1058.500 334V411', stroke: '#5f667c' });
add('price', 'path', { d: 'M1053.500 338.500l5-5 5 5M1056 411.500h5', stroke: '#77777c', fill: 'none' });
add('price', 'text', { x: 976, y: 316, fill: '#32c832', 'font-family': 'DejaVu Sans', 'font-size': 11 }, '2.89944503 (15.78%) 28994');

// Signal labels
[['Sell', 104, 332], ['Sell', 434, 266], ['Sell', 714, 423], ['Sell', 826, 404],
 ['Buy', 248, 552], ['Buy', 581, 580], ['Buy', 784, 463], ['Buy', 917, 487]].forEach(([t, x, y]) => {
  const sell = t === 'Sell', fill = sell ? '#800000' : '#008000';
  rect('price', x, y, 27, 18, fill, { rx: 2 });
  add('price', 'path', { fill, d: sell ? `M${x + 10} ${y + 18}h7l-3.500 2z` : `M${x + 10} ${y}h7l-3.500-2z` });
  add('price', 'text', { x: x + 13.5, y: y + 13, fill: '#fff', 'text-anchor': 'middle' }, t);
});

// Price scale
const tick = (y, color) => rect('scale', 1788, y, 5, 1, color);
for (let p = 32; p >= 8; p -= 2) {
  if ([24, 16, 14, 12].includes(p)) continue;
  const y = Math.floor(101.3 + (30 - p) * 26.68);
  tick(y, '#7f7f7f');
  add('scale', 'text', { x: 1797, y: y + 4, fill: '#d9d9d9' }, p + '.00000000');
}
[['24.17090000', 256], ['21.15000000', 337], ['21.55100000', 326], ['18.83770000', 398], ['18.40460000', 410],
 ['16.18770000', 469], ['16.56660000', 459], ['14.25550000', 521], ['13.94470000', 529], ['11.87810000', 584],
 ['12.21790000', 575], ['8.44220000', 676], ['8.71000000', 669]].forEach(([t, y]) => {
  rect('scale', 1788, y - 9, t[0] === '8' ? 75 : 81, 19, '#f0f0f0');
  tick(y, '#000');
  add('scale', 'text', { x: 1797, y: y + 4, fill: '#000' }, t);
});

// RSI: points from two horizontal scales, converted to page units
rect('rsi', 56, 733, 4000, 25, '#100019');
[733.5, 758.5].forEach(y => add('rsi', 'path', { d: `M56 ${y}H4000`, stroke: '#c8c8c8', 'stroke-dasharray': '5 6' }));
const rsiA = '143,420 160,418 175,412 190,410 203,432 212,432 220,424 228,428 240,412 254,412 262,432 280,432 291,452 306,463 322,482 332,474 345,476 358,472 364,463 374,465 382,456 397,463 425,465 435,456 458,456 470,465 500,465 523,470 537,489 546,464 568,464 580,456 595,462 618,462 632,453 640,442 665,447 674,458 684,445 700,440 709,423 718,424 732,433 745,423 755,424 762,420 770,422 779,402 787,397 795,406 804,400 822,411 838,406 857,424 872,424 885,415 900,415 915,408 930,414 957,414 965,406 982,382 990,386 1002,375 1027,371 1035,385 1044,382 1054,412 1076,414 1087,432 1115,430 1122,432 1147,459 1165,456 1181,458 1195,446 1224,431 1232,440 1241,465 1260,466 1268,470 1275,492 1285,480 1310,481 1330,463 1338,459 1360,462 1370,455 1400,448 1424,457 1440,447 1485,435';
const rsiB = '300,722 330,727 343,740 352,738 372,724 382,722 391,735 400,725 412,722 422,716 440,732 450,728 458,733 468,724 500,722 522,720 528,711 540,717 557,713 567,720 590,724 597,732 607,726 618,724 626,729 636,750 646,752 656,741 675,734 686,742 725,722 734,728 744,740 756,733 773,742 790,735 810,737 818,726 834,718 842,728 851,718 862,728 890,724 912,730 942,732 951,750 970,741 985,746 1005,745 1030,754 1050,755 1058,741 1070,743 1090,752 1108,768 1122,758 1140,757 1148,748 1157,757 1165,757 1173,750 1188,750 1198,728 1215,713 1227,722 1238,712 1254,702 1264,702 1280,718 1296,732 1312,732 1323,718 1333,729 1352,720 1372,703 1382,698 1390,705 1403,704';
const conv = (s, x0, k, y0) => s.split(' ').map(p => { const [x, y] = p.split(','); return `${(x0 + x / k).toFixed(1)},${(y0 + y / 3).toFixed(1)}`; }).join(' ');
add('rsi', 'polyline', { points: conv(rsiA, 0, 2.45, 600) + ' ' + conv(rsiB, 500, 2.8, 500), fill: 'none', stroke: '#cdb73c', 'stroke-width': 1.300 });

// Trend strips: first colour, then the x at which the colour flips
const alternate = (to, seed) => { const out = []; let x = 60; while (x < to) { seed = (seed * 1103515245 + 12345) % 2147483648; x += 4 + (seed >> 16) % 5 * 3; out.push(x); } return out; };
const strip = (id, y, first, flips) => {
  let x = 56, red = first === 'r';
  [...flips, 1002].forEach(f => {
    rect(id, x, y - 2, f - x, 5, red ? '#3c0000' : '#001e00');
    rect(id, x, y - 1, f - x, 3, red ? '#a80000' : '#005000');
    if (f < 1002) rect(id, f, y - 1, 3, 3, '#5a2800');
    x = f + (f < 1002 ? 3 : 0); red = !red;
  });
};
[['r', [981]], ['r', [424, 529, 950]], ['r', [324, 506, 800, 885, 955]], ['r', [321, 509, 993]],
 ['g', [124, 394, 471, 794, 849, 934]], ['g', [118, 261, 446, 594, 727, 797, 839, 930]]]
 .forEach(([c, f], i) => strip('trendA', [773, 778, 782, 787, 792, 797][i], c, f));
[['g', [81, 100, 110, 261, 275, 288, 354, 365, 432, 548, 579, 597, 660, 677, 713, 790, 832, 927, 961, 972]],
 ['g', [81, 97, 110, 257, 273, 282, 303, 308, 348, 369, 430, 484, 506, 545, 621, 636, 656, 671, 705, 752, 765, 790, 825, 878, 884, 909, 915, 926, 959, 985]],
 ['g', [64, 70, 96, 108, 123, 133, 155, 160, 186, 192, 238, 244, 262, 268, 298, 305, 337, 341, 345, 352, 390, 394, 430, 484, 506, 545, 554, 568, 576, 587, 621, 636, 656, 671, 702, 723, 727, 756, 765, 790, 811, 878, 884, 909, 913, 926, 959, 976]],
 ['r', [103, 118, 140, 166, 190, 230, 256, 285, 291, 298, 303, 333, 342, 348, 359, 387, 393, 425, 460, 464, 484, 501, 545, 556, 560, 572, 582, 621, 634, 656, 668, 702, 732, 743, 751, 765, 789, 811, 876, 884, 908, 912, 917, 920, 926, 959, 973, 978, 983]],
 ['r', [...alternate(515, 7), 537, 551, 562, 572, 583, 603, 607, 611, 615, 622, 629, 653, 663, 680, 687, 692, 717, 723, 733, 743, 751, 761, 788, 811, 845, 848, 852, 858, 875, 886, 902, 908, 915, 931, 941, 954, 973, 978, 987]],
 ['r', alternate(990, 99)]]
 .forEach(([c, f], i) => strip('trendB', [804, 809, 813, 818, 823, 828][i], c, f));

// Time scale: label and day offset from 1 November
[['Nov', 0], ['Dec', 30], ['2020', 61], ['Feb', 92], ['Mar', 121], ['Apr', 152], ['May', 182], ['Jun', 213], ['Jul', 243], ['Aug', 274],
 ['Sep', 305], ['Oct', 335], ['Nov', 366], ['Dec', 396], ['2021', 427], ['Feb', 458], ['Mar', 486]].forEach(([t, d]) => {
  const x = barX(d);
  rect('time', x, 832, 1, 3, '#7f7f7f');
  add('time', 'text', { x, y: 851, fill: '#d9d9d9', 'text-anchor': 'middle', 'font-weight': t[0] === '2' ? 700 : 400 }, t);
});
</script>
</body>
</html>
